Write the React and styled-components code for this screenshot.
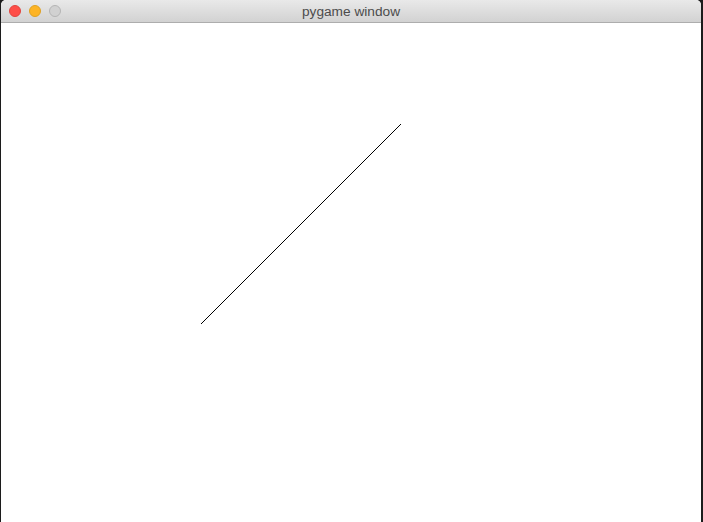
import React from 'react';
import styled, { createGlobalStyle } from 'styled-components';

const GlobalStyle = createGlobalStyle`
  html, body {
    margin: 0;
    padding: 0;
    background: #1c1c1c;
    overflow: hidden;
  }
`;

const LIGHTS = [
  { id: 'close', fill: '#fe4e48', border: '#e0443e' },
  { id: 'minimize', fill: '#fdb425', border: '#dea123' },
  { id: 'zoom', fill: '#d1d1d1', border: '#b4b4b4' },
];

const App = () => (
  <>
    <GlobalStyle />
    <Desktop>
      <Window>
        <TitleBar>
          <Lights>
            {LIGHTS.map(({ id, fill, border }) => (
              <Light key={id} fill={fill} border={border} />
            ))}
          </Lights>
          <Title>pygame window</Title>
        </TitleBar>
        <Canvas>
          <Drawing width="700" height="499" viewBox="0 0 700 499">
            <line
              x1="199.5"
              y1="301.5"
              x2="399.5"
              y2="101.5"
              stroke="#000"
              strokeWidth="1"
              shapeRendering="crispEdges"
            />
          </Drawing>
        </Canvas>
      </Window>
    </Desktop>
  </>
);

const Desktop = styled.div`
  display: flex;
  width: 703px;
  height: 522px;
  padding-left: 1px;
  box-sizing: border-box;
`;

const Window = styled.div`
  display: flex;
  flex-direction: column;
  width: 700px;
  height: 522px;
  border-radius: 5px 5px 0 0;
  overflow: hidden;
  background: #fff;
`;

const TitleBar = styled.div`
  position: relative;
  display: flex;
  align-items: center;
  justify-content: center;
  height: 22px;
  flex-shrink: 0;
  background: linear-gradient(#e9e9e9, #d2d2d2);
  border-bottom: 1px solid #adadad;
`;

const Lights = styled.div`
  position: absolute;
  left: 8px;
  top: 5px;
  display: flex;
  gap: 8px;
`;

const Light = styled.span`
  width: 12px;
  height: 12px;
  border-radius: 50%;
  box-sizing: border-box;
  background: ${p => p.fill};
  border: 1px solid ${p => p.border};
`;

const Title = styled.span`
  font-family: 'Liberation Sans', Arial, sans-serif;
  font-size: 13.7px;
  color: #4c4c4c;
  padding-top: 1px;
`;

const Canvas = styled.div`
  flex: 1;
  background: #fff;
`;

const Drawing = styled.svg`
  display: block;
`;

export default App;
